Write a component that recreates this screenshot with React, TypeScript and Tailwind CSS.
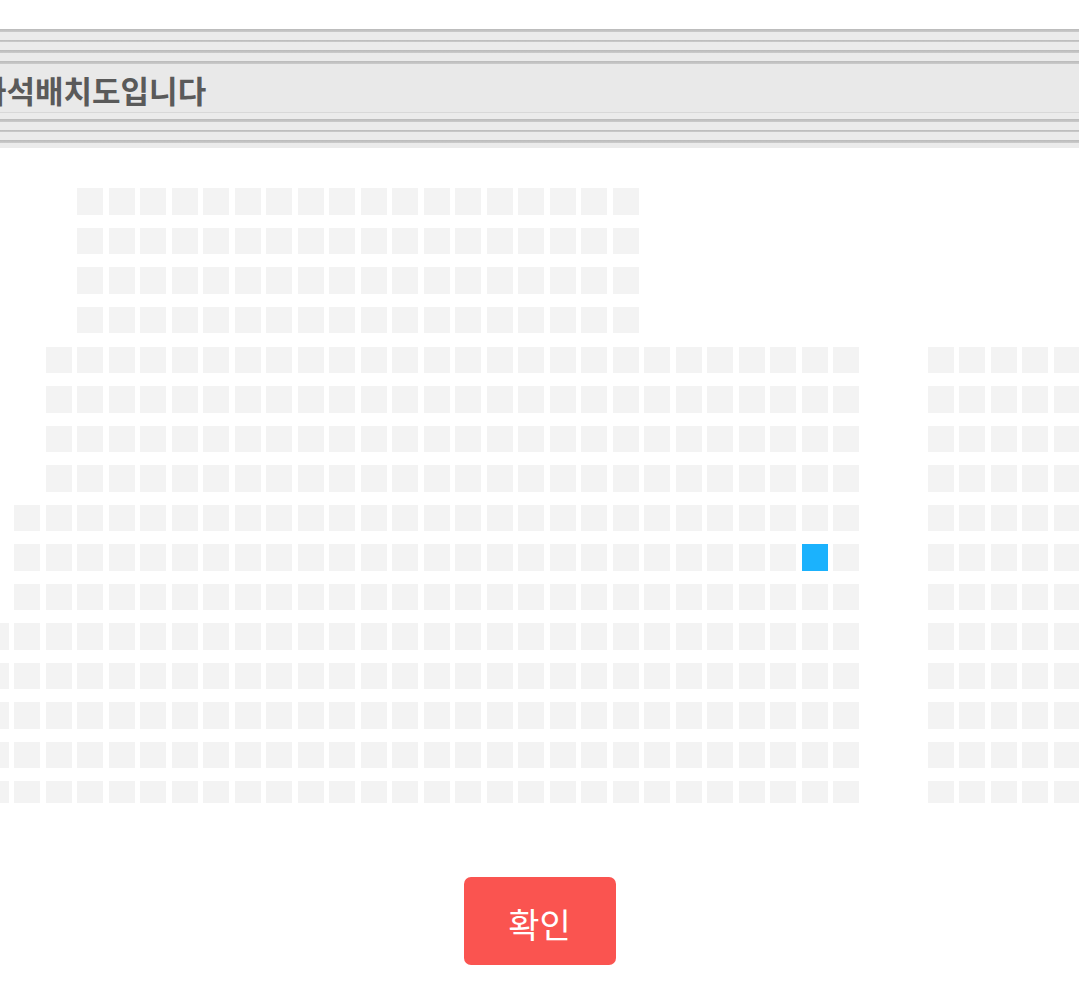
import React from 'react';

// seat columns per row: [from, to] ranges (inclusive), col 0 sits at x = -17.5
const ROWS: [number, number][][] = [
    [[3, 20]],
    [[3, 20]],
    [[3, 20]],
    [[3, 20]],
    [[2, 27], [30, 35]],
    [[2, 27], [30, 35]],
    [[2, 27], [30, 35]],
    [[2, 27], [30, 35]],
    [[1, 27], [30, 35]],
    [[1, 27], [30, 35]],
    [[1, 27], [30, 35]],
    [[0, 27], [30, 35]],
    [[0, 27], [30, 35]],
    [[0, 27], [30, 35]],
    [[0, 27], [30, 35]],
    [[0, 27], [30, 35]],
];

const TOTAL_COLS = 36;
const SELECTED = { row: 9, col: 26 };

function Stripe() {
    return <div className="h-[2.5px] bg-gradient-to-b from-[#bababa] to-[#cbcbcb]" />;
}

function Seat({ kind }: { kind: 'empty' | 'open' | 'selected' }) {
    if (kind === 'empty') return <span className="w-[26px] h-[26.5px] shrink-0" />;
    return (
        <span
            className={
                kind === 'selected'
                    ? 'w-[26px] h-[26.5px] shrink-0 bg-[#1bb2fd]'
                    : 'w-[26px] h-[26.5px] shrink-0 bg-[#f3f3f3]'
            }
        />
    );
}

export default function App() {
    return (
        <div className="w-[1079px] h-[985px] bg-white overflow-hidden flex flex-col font-['Noto_Sans_CJK_KR',sans-serif]">
            {/* Title band */}
            <div className="mt-[29px] bg-[#ebebeb]">
                <div className="flex flex-col gap-[8.2px]">
                    <Stripe />
                    <Stripe />
                    <Stripe />
                    <Stripe />
                </div>
                <div className="h-[49.5px] flex items-center bg-[#e9e9e9] border-b border-[#d8d8d8]">
                    <h1 className="ml-[-22px] text-[31px] leading-none font-bold text-[#5a5a5a] whitespace-nowrap pt-[3px]">
                        좌석배치도입니다
                    </h1>
                </div>
                <div className="flex flex-col gap-[8.2px] pt-[6px] pb-[5.5px]">
                    <Stripe />
                    <Stripe />
                    <Stripe />
                </div>
            </div>

            {/* Seat map */}
            <div className="h-[655px] overflow-hidden pt-[40px]">
                <div className="ml-[-17.5px] flex flex-col gap-y-[13.03px]">
                    {ROWS.map((ranges, r) => (
                        <div key={r} className="flex gap-x-[5.5px]">
                            {Array.from({ length: TOTAL_COLS }).map((_, c) => {
                                const open = ranges.some(([a, b]) => c >= a && c <= b);
                                const kind = !open
                                    ? 'empty'
                                    : r === SELECTED.row && c === SELECTED.col
                                      ? 'selected'
                                      : 'open';
                                return <Seat key={c} kind={kind} />;
                            })}
                        </div>
                    ))}
                </div>
            </div>

            {/* Confirm */}
            <div className="flex justify-center mt-[74px]">
                <button className="w-[152px] h-[88px] rounded-[7px] bg-[#fa5450] text-white text-[34px] font-normal leading-none pt-[5px]">
                    확인
                </button>
            </div>
        </div>
    );
}
